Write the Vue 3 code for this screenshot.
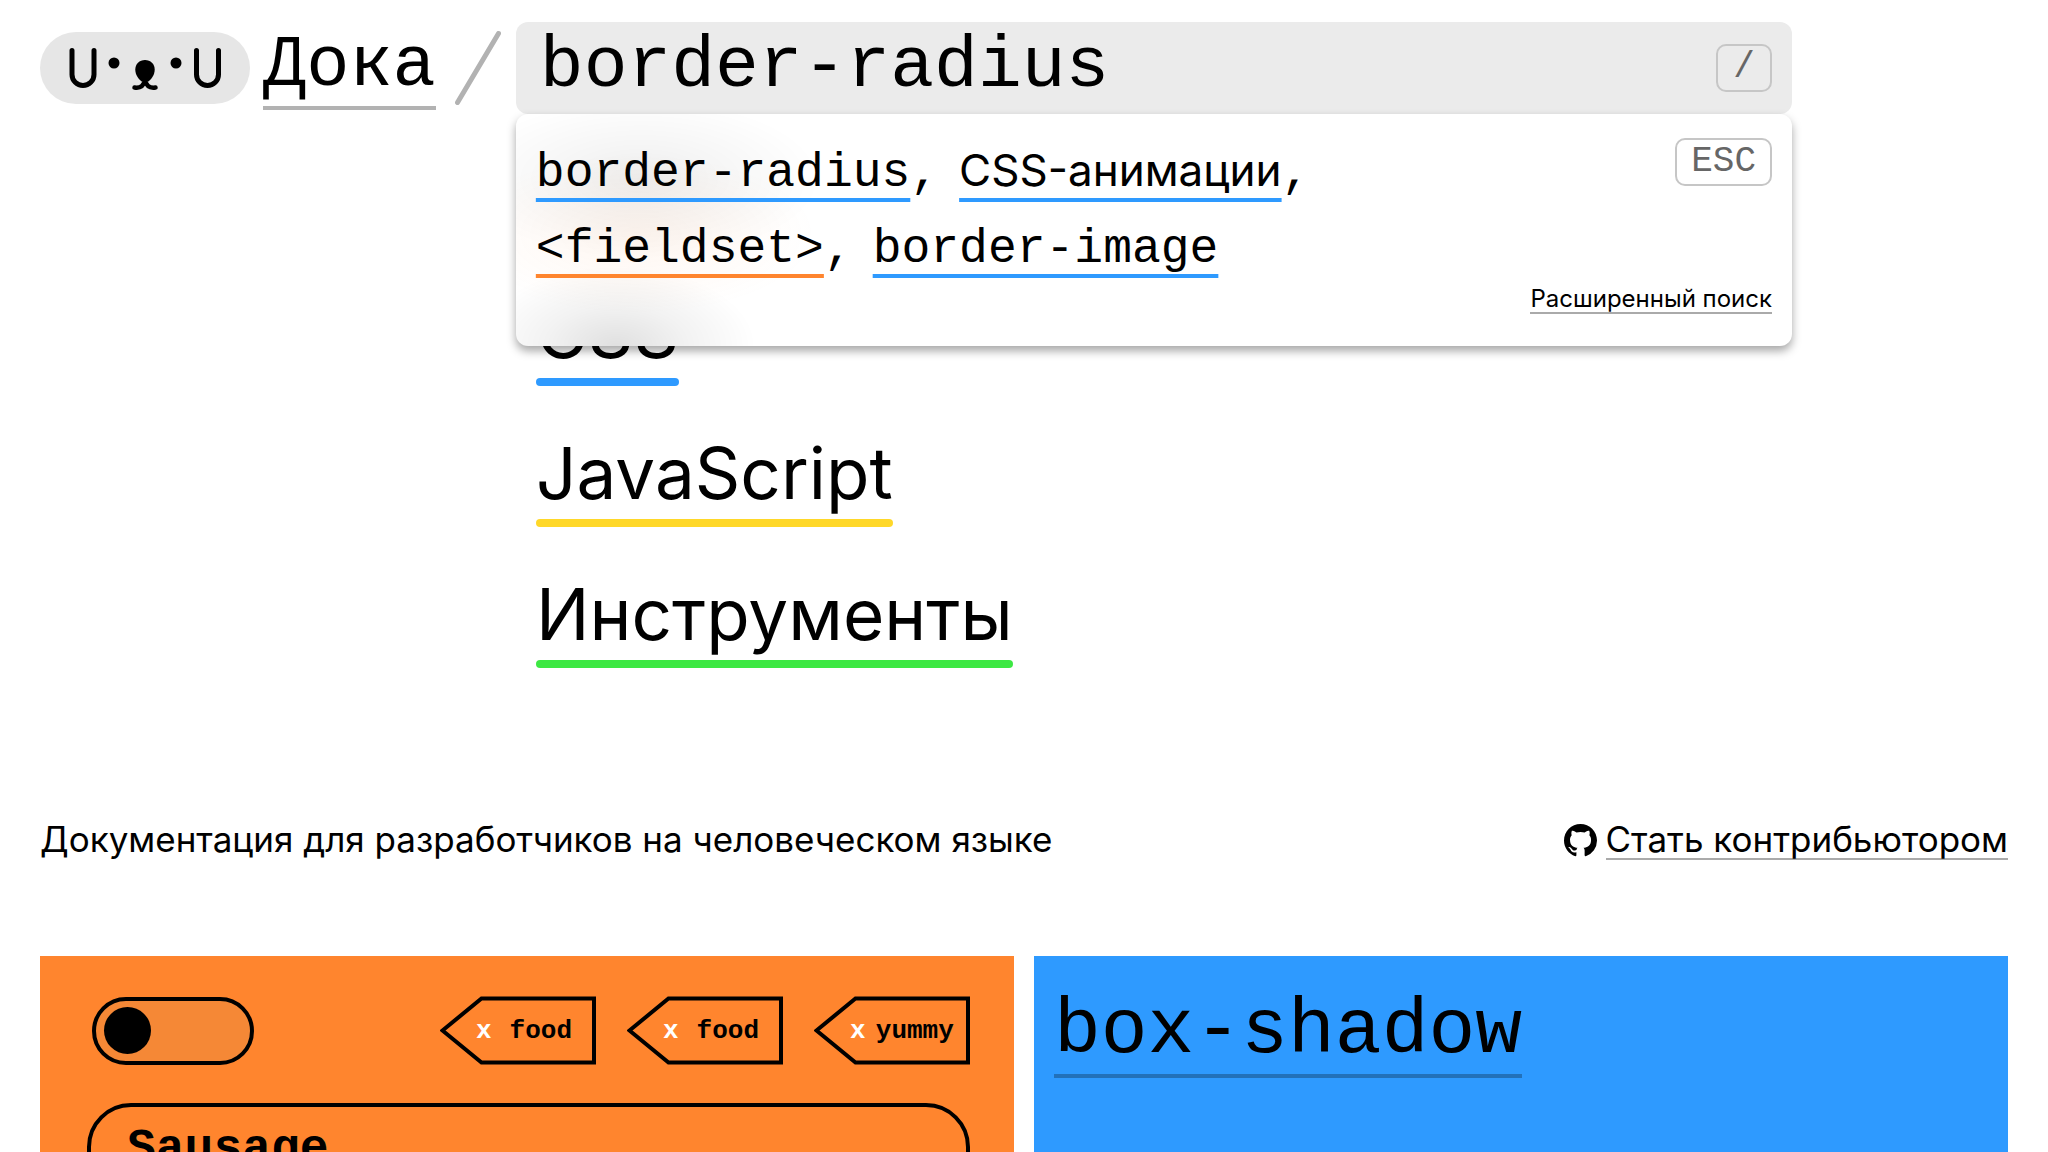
<script setup>
import { ref } from 'vue'

const query = ref('border-radius')
const toggled = ref(false)
const product = ref('Sausage')

const results = [
  { title: 'border-radius', kind: 'css', code: true },
  { title: 'CSS-анимации', kind: 'css', code: false },
  { title: '<fieldset>', kind: 'html', code: true },
  { title: 'border-image', kind: 'css', code: true },
]

const sections = [
  { title: 'CSS', kind: 'css' },
  { title: 'JavaScript', kind: 'js' },
  { title: 'Инструменты', kind: 'tools' },
]

const tags = ['food', 'food', 'yummy']
</script>

<template>
  <div class="page">
    <header class="header">
      <a class="face" href="#" aria-label="Дока">
        <svg width="154" height="48" viewBox="0 -4 154 48" fill="none" stroke="#000" stroke-width="5" stroke-linecap="round">
          <path d="M4 2.500V26.500a11 11 0 0 0 22 0V2.500" />
          <path d="M128.500 2.500V26.500a11 11 0 0 0 22 0V2.500" />
          <circle cx="46" cy="15" r="5.500" fill="#000" stroke="none" />
          <circle cx="108" cy="15" r="5.500" fill="#000" stroke="none" />
          <path d="M77 12c-5.600 0-9.700 4.100-9.700 9.500 0 5.800 3.500 9.500 6.300 12h6.800c2.800-2.500 6.300-6.200 6.300-12 0-5.400-4.100-9.500-9.700-9.500z" fill="#000" stroke="none" />
          <path d="M66.500 39.500c5 .8 9-1.500 10.500-7 1.500 5.500 5.500 7.800 10.500 7" stroke-width="4.500" />
        </svg>
      </a>
      <a class="brand" href="#">Дока</a>
      <svg class="slash" width="46" height="74" viewBox="0 0 46 74" aria-hidden="true">
        <path d="M2.500 71.500 43.500 2.500" stroke="#b2b2b2" stroke-width="5" stroke-linecap="round" />
      </svg>
      <form class="search" role="search" @submit.prevent>
        <div class="field">
          <input v-model="query" class="query" type="text" aria-label="Поиск" />
          <kbd class="key">/</kbd>
        </div>
        <div class="panel">
          <ul class="results">
            <li v-for="item in results" :key="item.title" class="result">
              <a href="#" class="result-link" :class="[item.kind, { prose: !item.code }]">{{ item.title }}</a>
            </li>
          </ul>
          <div class="panel-side">
            <button class="key" type="button">ESC</button>
            <a class="advanced" href="#">Расширенный поиск</a>
          </div>
        </div>
      </form>
    </header>

    <nav class="sections">
      <a v-for="item in sections" :key="item.title" href="#" class="section" :class="item.kind">{{ item.title }}</a>
    </nav>

    <div class="intro">
      <p class="tagline">Документация для разработчиков на человеческом языке</p>
      <div class="contribute">
        <svg width="33" height="33" viewBox="0 0 16 16" aria-hidden="true">
          <path d="M8 0C3.580 0 0 3.580 0 8c0 3.540 2.290 6.530 5.470 7.590.4.070.55-.17.55-.38 0-.19-.01-.82-.01-1.490-2.010.37-2.530-.49-2.690-.94-.09-.23-.48-.94-.82-1.130-.28-.15-.68-.52-.01-.53.63-.01 1.080.58 1.230.82.72 1.210 1.870.87 2.330.66.07-.52.28-.87.51-1.070-1.780-.2-3.640-.89-3.640-3.950 0-.87.31-1.590.82-2.150-.08-.2-.36-1.020.08-2.120 0 0 .67-.21 2.200.82.64-.18 1.320-.27 2-.27s1.360.09 2 .27c1.530-1.040 2.200-.82 2.200-.82.44 1.100.16 1.920.08 2.120.51.56.82 1.270.82 2.150 0 3.070-1.870 3.750-3.650 3.950.29.25.54.73.54 1.480 0 1.070-.01 1.930-.01 2.200 0 .21.15.46.55.38A8.010 8.010 0 0 0 16 8c0-4.420-3.580-8-8-8z" />
        </svg>
        <a class="contribute-link" href="#">Стать контрибьютором</a>
      </div>
    </div>

    <main class="cards">
      <article class="card orange">
        <div class="controls">
          <input v-model="toggled" class="toggle" type="checkbox" aria-label="Переключатель" />
          <div class="tags">
            <button v-for="(tag, i) in tags" :key="i" class="tag" type="button">
              <svg class="tag-shape" viewBox="0 0 156 69" aria-hidden="true">
                <path d="M2.500 34.500 41.500 2.500H154V66.500H41.500z" fill="none" stroke="#000" stroke-width="4" />
              </svg>
              <span class="cross">x</span>
              <span class="tag-name">{{ tag }}</span>
            </button>
          </div>
        </div>
        <input v-model="product" class="product" type="text" aria-label="Название" />
      </article>
      <article class="card blue">
        <a class="card-title" href="#">box-shadow</a>
      </article>
    </main>
  </div>
</template>

<style>
body {
  margin: 0;
  background: #fff;
}
</style>

<style scoped>
.page {
  box-sizing: border-box;
  height: 100vh;
  overflow: hidden;
  padding: 22px 40px 0;
  color: #000;
  font-family: Inter, "Liberation Sans", sans-serif;
}

a {
  color: inherit;
  text-decoration: none;
}

input,
button {
  box-sizing: border-box;
  margin: 0;
  color: inherit;
}

.html { --accent: #ff852e; }
.css { --accent: #2e9aff; }
.js { --accent: #ffd829; }
.tools { --accent: #3de843; }

.header {
  display: flex;
  align-items: center;
  padding-right: 216px;
}

.face {
  display: flex;
  flex: none;
  align-items: center;
  justify-content: center;
  width: 210px;
  height: 72px;
  border-radius: 36px;
  background: #e6e6e6;
}

.brand {
  margin: 0 19px 0 13px;
  border-bottom: 4px solid #b2b2b2;
  font: 72px/80px "Liberation Mono", monospace;
}

.slash {
  flex: none;
  margin-right: 15px;
}

.search {
  position: relative;
  flex: 1;
  min-width: 0;
}

.field {
  display: flex;
  align-items: center;
  height: 92px;
  padding: 0 20px 0 24px;
  border-radius: 12px;
  background: #ebebeb;
}

.query {
  flex: 1;
  min-width: 0;
  height: 84px;
  padding: 0 0 4px;
  border: 0;
  outline: 0;
  background: none;
  font: 73px/74px "Liberation Mono", monospace;
}

.key {
  box-sizing: border-box;
  min-width: 56px;
  height: 48px;
  padding: 0 14px;
  border: 2px solid #c6c6c6;
  border-radius: 10px;
  background: none;
  color: #666;
  font: 36px/44px "Liberation Mono", monospace;
  text-align: center;
}

.panel {
  position: absolute;
  z-index: 1;
  top: 100%;
  right: 0;
  left: 0;
  display: flex;
  justify-content: space-between;
  box-sizing: border-box;
  min-height: 232px;
  padding: 24px 20px 32px;
  border-radius: 12px;
  background:
    radial-gradient(180px 80px at 125px 65px, rgba(0, 0, 0, 0.07), rgba(0, 0, 0, 0.04) 40%, transparent),
    radial-gradient(180px 80px at 120px 120px, rgba(255, 133, 46, 0.07), rgba(255, 133, 46, 0.04) 45%, transparent),
    radial-gradient(140px 80px at 100px 100%, rgba(0, 0, 0, 0.12), rgba(0, 0, 0, 0.05) 50%, transparent),
    #fff;
  box-shadow: 0 5px 10px rgba(0, 0, 0, 0.35);
}

.results {
  display: flex;
  flex: 1;
  flex-wrap: wrap;
  align-content: flex-start;
  gap: 6px 20px;
  margin: 0;
  padding: 0;
  list-style: none;
  font: 48px/70px "Liberation Mono", monospace;
}

.result {
  height: 70px;
}

.result:not(:last-child)::after {
  content: ",";
}

.result-link {
  line-height: 1;
  text-decoration: underline 4px var(--accent);
  text-decoration-skip-ink: none;
  text-underline-offset: 12px;
}

.prose {
  font-family: Inter, "Liberation Sans", sans-serif;
  font-size: 44px;
}

.panel-side {
  display: flex;
  flex-direction: column;
  align-items: flex-end;
  justify-content: space-between;
}

.advanced {
  border-bottom: 2px solid #aaa;
  font-size: 24px;
  line-height: 26px;
}

.sections {
  display: flex;
  flex-direction: column;
  align-items: flex-start;
  gap: 41px;
  margin: 172px 0 0 496px;
}

.section {
  font-size: 71px;
  line-height: 92px;
}

.section::after {
  content: "";
  display: block;
  height: 8px;
  border-radius: 4px;
  background: var(--accent);
}

.intro {
  display: flex;
  align-items: flex-start;
  justify-content: space-between;
  margin: 152px 0 96px;
  font-size: 35px;
  line-height: 38px;
}

.tagline {
  margin: 0;
}

.contribute {
  display: flex;
  align-items: center;
  gap: 9px;
}

.contribute-link {
  border-bottom: 2px solid #aaa;
}

.cards {
  display: grid;
  grid-template-columns: 1fr 1fr;
  gap: 20px;
}

.card {
  box-sizing: border-box;
  min-height: 480px;
}

.orange {
  padding: 40px 44px 40px 47px;
  background: #ff852e;
}

.blue {
  padding: 32px 20px;
  background: #2e9aff;
}

.controls {
  display: flex;
  align-items: center;
  justify-content: space-between;
  padding-left: 5px;
}

.toggle {
  display: flex;
  align-items: center;
  width: 162px;
  height: 68px;
  padding: 0 8px;
  border: 4px solid #000;
  border-radius: 34px;
  background: #f58836;
  appearance: none;
}

.toggle::before {
  content: "";
  width: 47px;
  height: 47px;
  border-radius: 50%;
  background: #000;
}

.toggle:checked {
  justify-content: flex-end;
}

.tags {
  display: flex;
  gap: 31px;
}

.tag {
  position: relative;
  display: flex;
  align-items: center;
  width: 156px;
  height: 69px;
  padding: 0 14px 0 36px;
  border: 0;
  background: none;
  font: bold 26px/32px "Liberation Mono", monospace;
}

.tag-shape {
  position: absolute;
  inset: 0;
}

.cross {
  color: #fff;
}

.tag-name {
  flex: 1;
  margin-left: 8px;
  text-align: center;
}

.product {
  display: block;
  width: 100%;
  height: 92px;
  margin-top: 38px;
  padding: 0 36px;
  border: 4px solid #000;
  border-radius: 44px;
  background: none;
  font: bold 48px/56px "Liberation Mono", monospace;
}

.card-title {
  display: inline-block;
  border-bottom: 4px solid #2271ba;
  font: 78px/86px "Liberation Mono", monospace;
}
</style>
